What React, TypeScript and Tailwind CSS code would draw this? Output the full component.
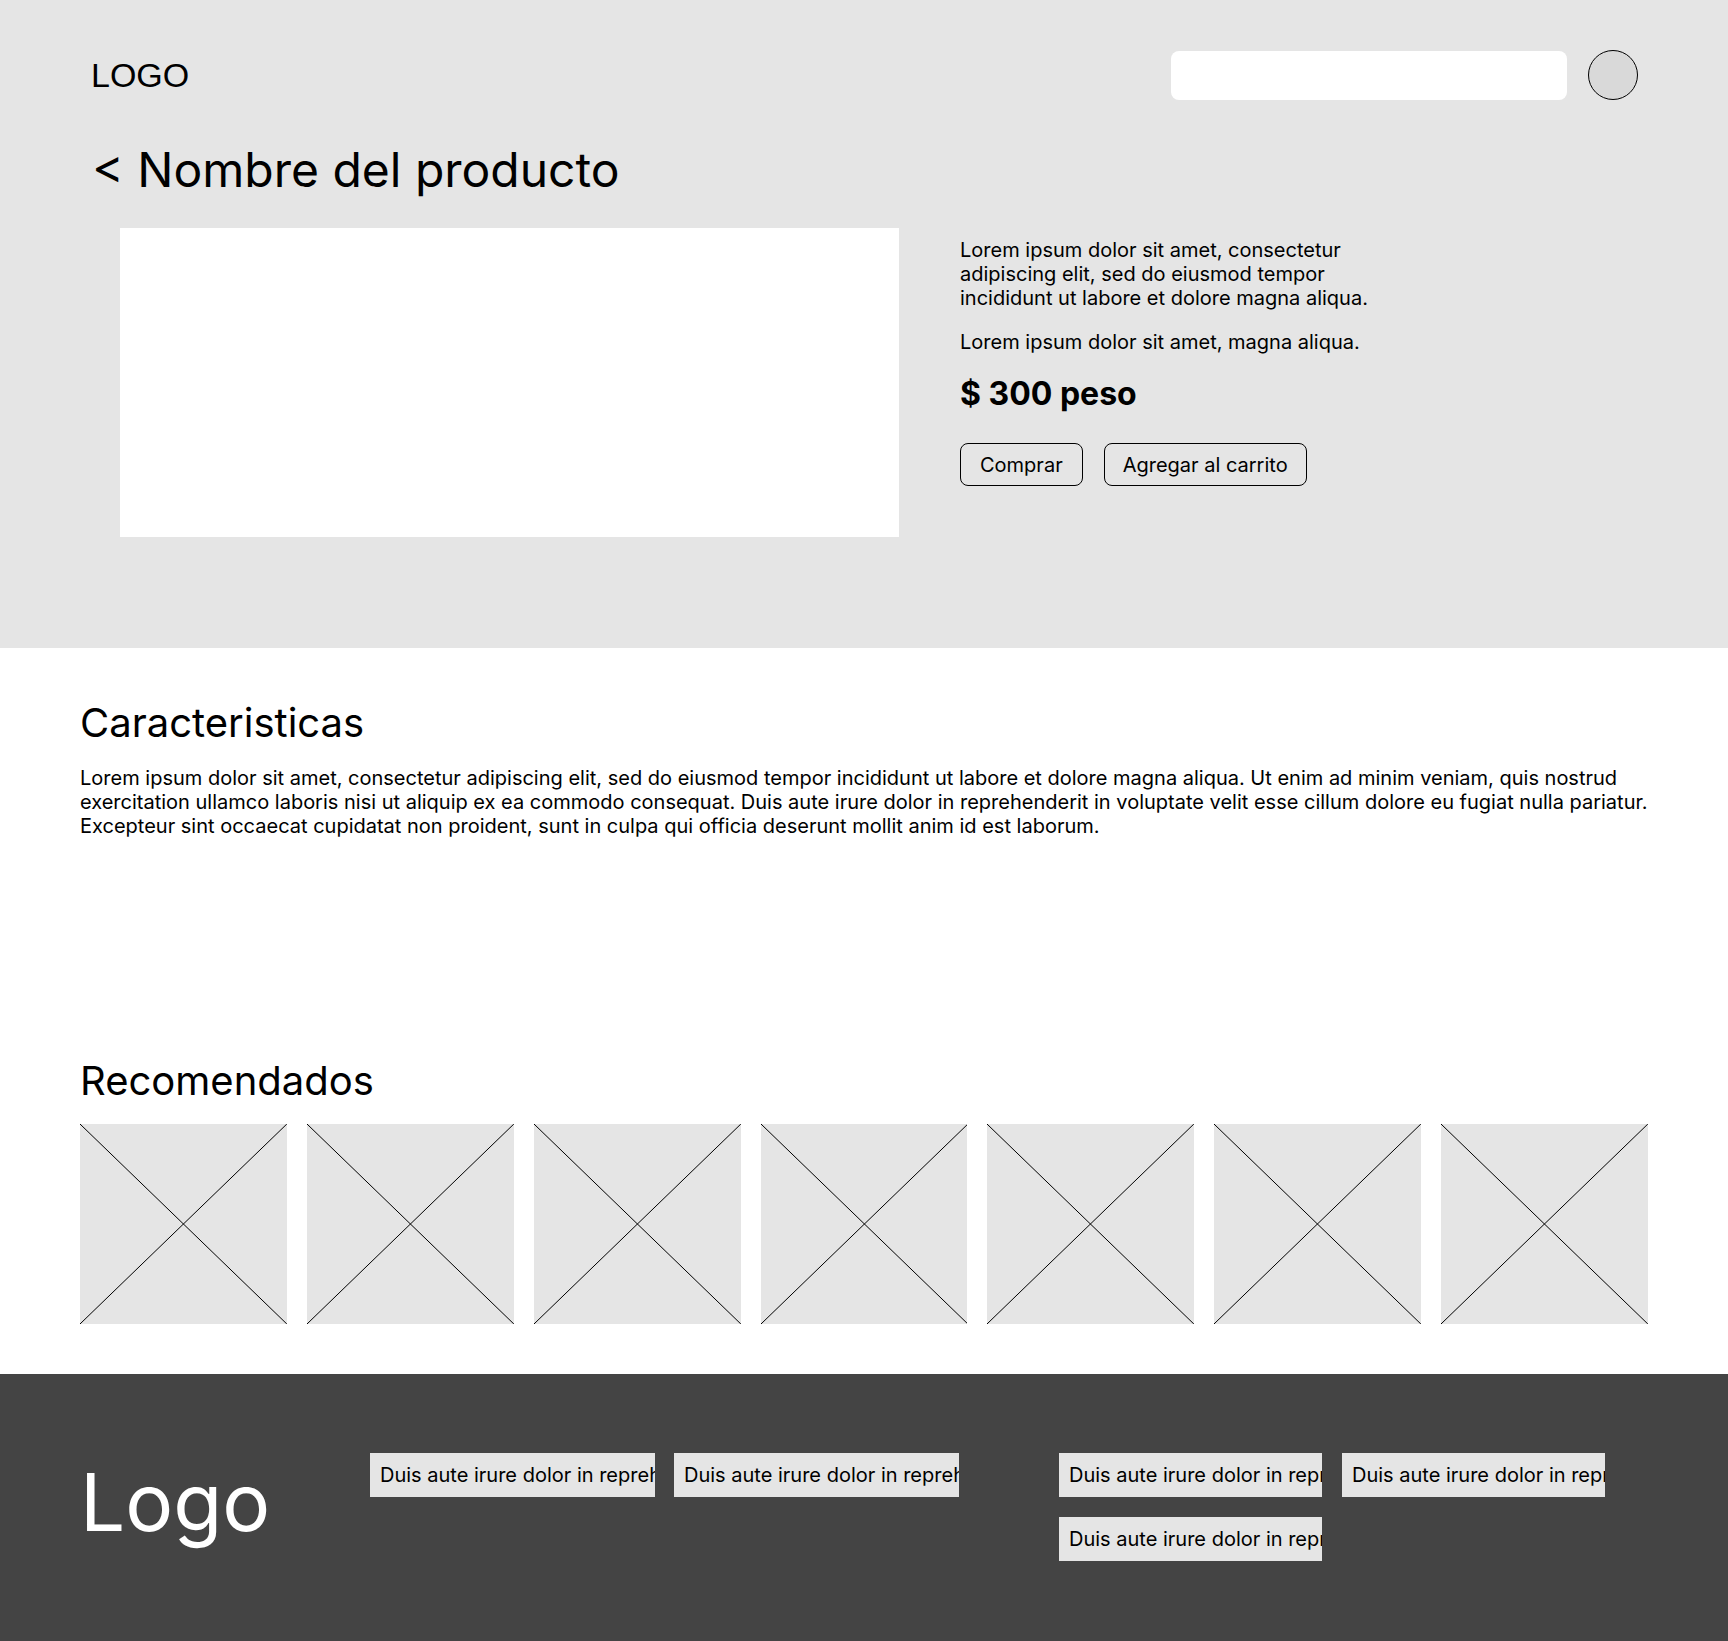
import React from 'react';

const sans = { fontFamily: 'Inter, "Noto Sans", sans-serif' };

const productText = [
  'Lorem ipsum dolor sit amet, consectetur adipiscing elit, sed do eiusmod tempor incididunt ut labore et dolore magna aliqua.',
  'Lorem ipsum dolor sit amet, magna aliqua.',
];

const features =
  'Lorem ipsum dolor sit amet, consectetur adipiscing elit, sed do eiusmod tempor incididunt ut labore et dolore magna aliqua. Ut enim ad minim veniam, quis nostrud exercitation ullamco laboris nisi ut aliquip ex ea commodo consequat. Duis aute irure dolor in reprehenderit in voluptate velit esse cillum dolore eu fugiat nulla pariatur. Excepteur sint occaecat cupidatat non proident, sunt in culpa qui officia deserunt mollit anim id est laborum.';

const linkText = 'Duis aute irure dolor in reprehenderit in voluptate';

function Placeholder() {
  return (
    <div className="relative h-[200px] bg-[#e5e5e5]">
      <svg className="absolute inset-0 h-full w-full" viewBox="0 0 100 100" preserveAspectRatio="none">
        <line x1="0" y1="0" x2="100" y2="100" stroke="#000" strokeWidth="1" vectorEffect="non-scaling-stroke" />
        <line x1="100" y1="0" x2="0" y2="100" stroke="#000" strokeWidth="1" vectorEffect="non-scaling-stroke" />
      </svg>
    </div>
  );
}

function FooterLink({ wide }: { wide?: boolean }) {
  return (
    <div
      className={`h-[44px] overflow-hidden whitespace-nowrap bg-[#e5e5e5] pl-[10px] text-[20px] leading-[44px] text-black ${
        wide ? 'w-[285px]' : 'w-[263px]'
      }`}
    >
      {linkText}
    </div>
  );
}

export default function App() {
  return (
    <div className="min-h-[1641px] bg-white text-black" style={sans}>
      {/* product header */}
      <section className="bg-[#e5e5e5] px-[90px] pt-[50px] pb-[111px]">
        <div className="flex items-center justify-between">
          <span className="pl-px text-[34px] leading-none" style={{ fontFamily: '"Liberation Sans", Arial, sans-serif' }}>
            LOGO
          </span>
          <div className="flex items-center gap-[21px]">
            <div className="h-[49px] w-[396px] rounded-lg bg-white" />
            <div className="h-[50px] w-[50px] rounded-full border border-black bg-[#d9d9d9]" />
          </div>
        </div>

        <h1 className="mt-[46px] pl-[2px] text-[48px] leading-[48px] font-normal">&lt; Nombre del producto</h1>

        <div className="mt-[34px] flex gap-[61px] pl-[30px]">
          <div className="h-[309px] w-[779px] bg-white" />
          <div className="w-[430px] pt-[10px]">
            <div className="space-y-5 text-[20px] leading-6">
              {productText.map((t, i) => (
                <p key={i}>{t}</p>
              ))}
            </div>
            <p className="mt-[21px] text-[32px] leading-[38px] font-bold">$ 300 peso</p>
            <div className="mt-[30px] flex gap-[21px] text-[20px]">
              <button className="flex h-[43px] items-center rounded-lg border border-black px-[19px]">Comprar</button>
              <button className="flex h-[43px] items-center rounded-lg border border-black px-[18px]">
                Agregar al carrito
              </button>
            </div>
          </div>
        </div>
      </section>

      {/* features + recommendations */}
      <section className="px-[80px] pt-[51px] pb-[50px]">
        <h2 className="text-[40px] leading-[48px] font-normal">Caracteristicas</h2>
        <p className="mt-[19px] text-[20px] leading-6">{features}</p>

        <h2 className="mt-[219px] text-[40px] leading-[48px] font-normal">Recomendados</h2>
        <div className="mt-[19px] grid grid-cols-7 gap-5">
          {Array.from({ length: 7 }).map((_, i) => (
            <Placeholder key={i} />
          ))}
        </div>
      </section>

      {/* footer */}
      <footer className="flex h-[268px] items-start bg-[#444444] pl-[80px] pt-[79px]">
        <div className="mt-[9px] w-[290px] text-[80px] leading-[80px] text-white">Logo</div>
        <div className="flex gap-[19px]">
          <FooterLink wide />
          <FooterLink wide />
        </div>
        <div className="ml-[100px] flex w-[546px] flex-wrap gap-5">
          <FooterLink />
          <FooterLink />
          <FooterLink />
        </div>
      </footer>
    </div>
  );
}
